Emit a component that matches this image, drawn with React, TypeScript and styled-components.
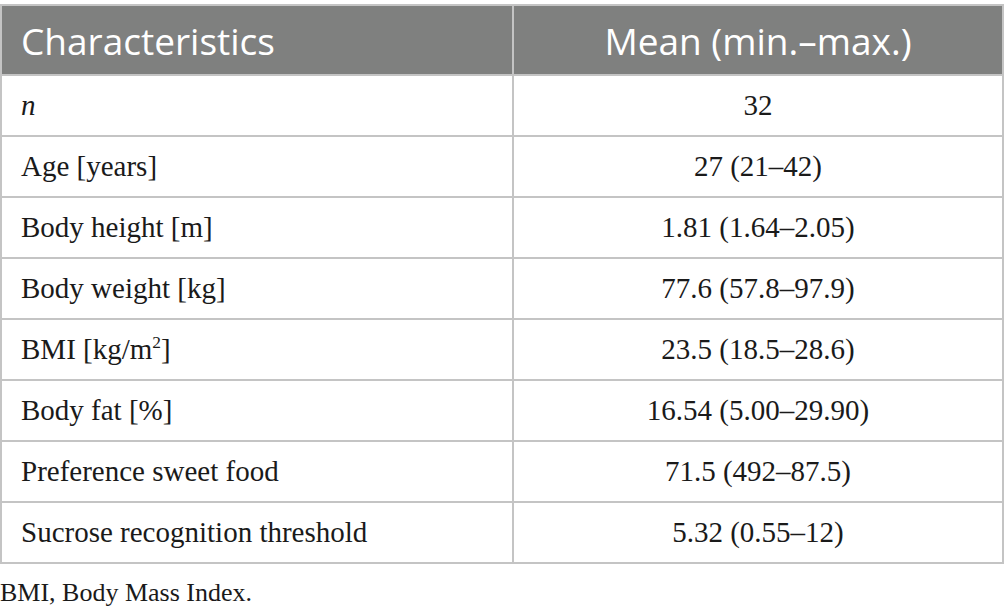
import styled, { createGlobalStyle } from 'styled-components';

const GlobalStyle = createGlobalStyle`
  body {
    margin: 0;
    background: #fff;
  }
`;

const Page = styled.div`
  width: 1005px;
  padding-top: 4px;
`;

const Table = styled.table`
  width: 1004px;
  border-collapse: collapse;
  table-layout: fixed;
  border: 2px solid #c4c4c4;
`;

const HeadCell = styled.th<{ $center?: boolean }>`
  height: 68px;
  padding: 0 0 0 ${(p) => (p.$center ? '0' : '19px')};
  background-color: #7f807f;
  color: #fff;
  font-family: 'Open Sans', 'Liberation Sans', sans-serif;
  font-weight: 400;
  font-size: 37px;
  text-align: ${(p) => (p.$center ? 'center' : 'left')};
  border: 2px solid #c4c4c4;
  border-top: none;
  border-bottom: none;
`;

const Cell = styled.td<{ $center?: boolean }>`
  height: 61px;
  padding: 0 0 0 ${(p) => (p.$center ? '0' : '19px')};
  font-family: 'Liberation Serif', 'Times New Roman', serif;
  font-size: 29px;
  color: #1a1a1a;
  text-align: ${(p) => (p.$center ? 'center' : 'left')};
  border: 2px solid #c4c4c4;
  box-sizing: border-box;
`;

const Note = styled.p`
  margin: 14px 0 0;
  font-family: 'Liberation Serif', 'Times New Roman', serif;
  font-size: 26px;
  color: #1a1a1a;
`;

const rows: [React.ReactNode, string][] = [
  [<i key="n">n</i>, '32'],
  ['Age [years]', '27 (21–42)'],
  ['Body height [m]', '1.81 (1.64–2.05)'],
  ['Body weight [kg]', '77.6 (57.8–97.9)'],
  [
    <span key="bmi">
      BMI [kg/m<sup style={{ fontSize: '0.6em', lineHeight: 0 }}>2</sup>]
    </span>,
    '23.5 (18.5–28.6)',
  ],
  ['Body fat [%]', '16.54 (5.00–29.90)'],
  ['Preference sweet food', '71.5 (492–87.5)'],
  ['Sucrose recognition threshold', '5.32 (0.55–12)'],
];

export default function App() {
  return (
    <Page>
      <GlobalStyle />
      <Table>
        <colgroup>
          <col style={{ width: 512 }} />
          <col />
        </colgroup>
        <thead>
          <tr>
            <HeadCell>Characteristics</HeadCell>
            <HeadCell $center>Mean (min.–max.)</HeadCell>
          </tr>
        </thead>
        <tbody>
          {rows.map(([label, value], i) => (
            <tr key={i}>
              <Cell>{label}</Cell>
              <Cell $center>{value}</Cell>
            </tr>
          ))}
        </tbody>
      </Table>
      <Note>BMI, Body Mass Index.</Note>
    </Page>
  );
}
